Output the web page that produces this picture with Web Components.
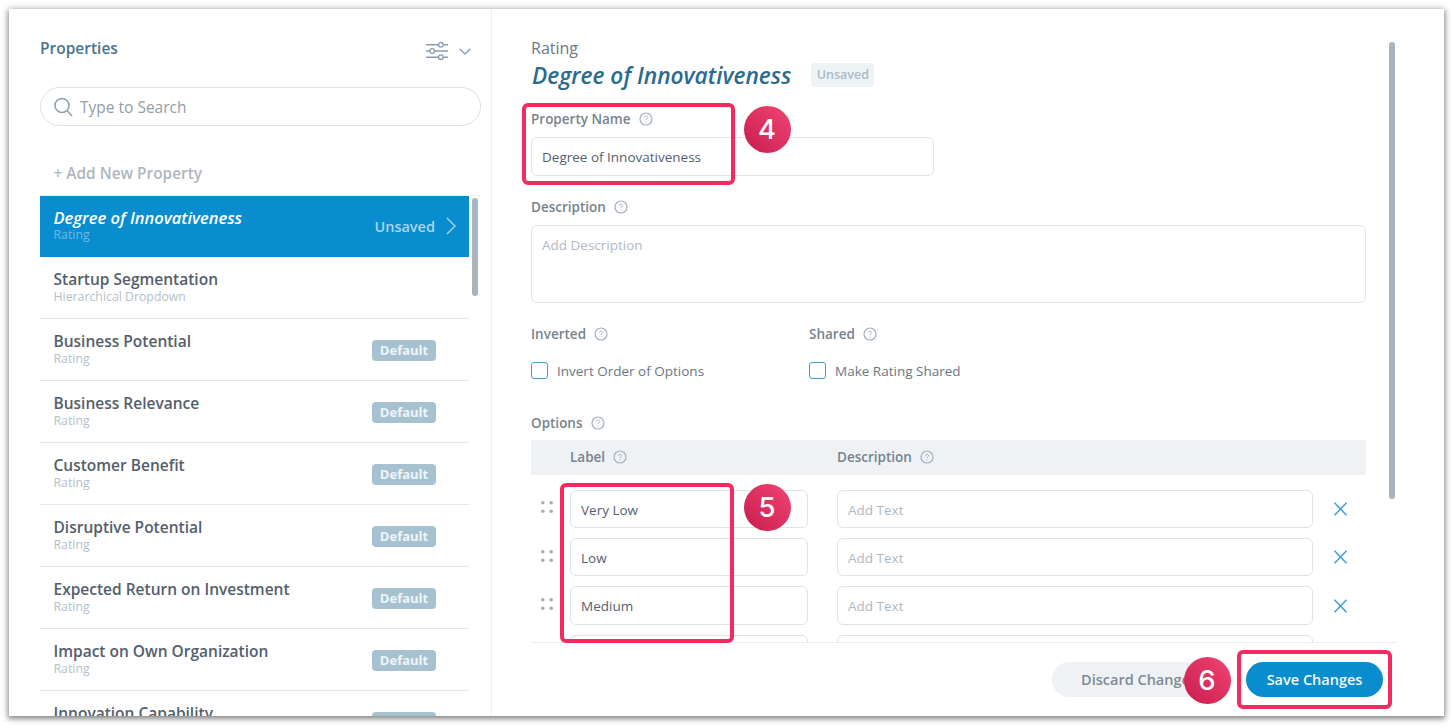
<!DOCTYPE html>
<html>
<head>
<meta charset="utf-8">
<style>
html, body { margin: 0; padding: 0; background: #fff; overflow: hidden; }
body { font-family: "Open Sans", sans-serif; }
</style>
</head>
<body>
<prop-app></prop-app>
<script>
const helpIcon = `<svg width="14" height="14" viewBox="0 0 14 14" fill="none" stroke="#a3b0bc" stroke-width="1.2"><circle cx="7" cy="7" r="6"/><path d="M5.4 5.7c0-.9.7-1.5 1.6-1.5s1.6.6 1.6 1.4c0 1.2-1.6 1.2-1.6 2.5" stroke-width="1"/><path d="M7 9.6v.9" stroke-width="1"/></svg>`;

//label with the little question mark
class PropLabel extends HTMLElement {
    constructor() {
        super();
        this.attachShadow({ mode: "open" });
        this.shadowRoot.innerHTML = `
<style>
:host { display: flex; align-items: center; gap: 8px; height: 18px; font-size: 13.5px; font-weight: 600; color: #75838f; white-space: nowrap; }
svg { display: block; }
</style>
<slot></slot>${helpIcon}`;
    }
}
customElements.define("prop-label", PropLabel);

//fake text input, text stays real text
class PropField extends HTMLElement {
    constructor() {
        super();
        this.attachShadow({ mode: "open" });
        this.shadowRoot.innerHTML = `
<style>
:host { display: block; box-sizing: border-box; height: 38.5px; padding: 0 10px; border: 1px solid #dde3ea; border-radius: 6px; background: #fff; font-size: 13.5px; line-height: 38px; color: #56606c; white-space: nowrap; overflow: hidden; }
:host([empty]) { color: #b0b9c4; }
:host([tall]) { height: 78px; }
</style>
<slot></slot>`;
    }
}
customElements.define("prop-field", PropField);

class PropCheck extends HTMLElement {
    constructor() {
        super();
        this.attachShadow({ mode: "open" });
        this.shadowRoot.innerHTML = `
<style>
:host { display: flex; align-items: center; gap: 9px; height: 18px; font-size: 13.5px; color: #6b7682; white-space: nowrap; }
i { display: block; box-sizing: border-box; width: 17px; height: 17px; border: 1.3px solid #3d9ed6; border-radius: 3px; }
</style>
<i></i><slot></slot>`;
    }
}
customElements.define("prop-check", PropCheck);

//one entry of the property list
class PropItem extends HTMLElement {
    constructor() {
        super();
        this.attachShadow({ mode: "open" });
        const active = this.hasAttribute("active");
        const badge = this.getAttribute("badge");
        let right = "";
        if (active) {
            right = `<span class="state">Unsaved</span><svg width="10" height="18" viewBox="0 0 10 18" fill="none" stroke="#a9d6ee" stroke-width="1.4"><path d="M1 1l8 8-8 8"/></svg>`;
        } else if (badge) {
            right = `<span class="badge">${badge}</span>`;
        }
        this.shadowRoot.innerHTML = `
<style>
:host { display: flex; align-items: center; box-sizing: border-box; height: 62px; padding: 1px 13px 0 13.500px; border-bottom: 1px solid #e0e7ee; flex: none; }
:host([active]) { height: 61px; padding-top: 0; background: #0a8dcf; border-bottom-color: #0a8dcf; }
.text { flex: 1; min-width: 0; padding-bottom: 4px; }
.name { font-size: 15.5px; line-height: 20px; font-weight: 600; color: #535e6c; white-space: nowrap; }
.sub { font-size: 12.3px; line-height: 14px; color: #b3bfca; margin-top: 1px; }
:host([active]) .text { padding-bottom: 3px; }
:host([active]) .name { color: #fff; font-style: italic; font-size: 16.5px; }
:host([active]) .sub { color: #6cbae4; margin-top: 0; }
.badge { width: 64px; height: 21px; margin-right: 20px; border-radius: 4px; background: #a6c2d0; color: #eef4f7; font-size: 13px; font-weight: 700; line-height: 21px; text-align: center; }
.state { font-size: 14.500px; font-weight: 600; color: #a9d6ee; margin-right: 11px; }
svg { display: block; }
</style>
<div class="text"><div class="name">${this.getAttribute("name")}</div><div class="sub">${this.getAttribute("type")}</div></div>
${right}`;
    }
}
customElements.define("prop-item", PropItem);

class PropSidebar extends HTMLElement {
    constructor() {
        super();
        this.attachShadow({ mode: "open" });
        const items = [
            ["Startup Segmentation", "Hierarchical Dropdown", ""],
            ["Business Potential", "Rating", "Default"],
            ["Business Relevance", "Rating", "Default"],
            ["Customer Benefit", "Rating", "Default"],
            ["Disruptive Potential", "Rating", "Default"],
            ["Expected Return on Investment", "Rating", "Default"],
            ["Impact on Own Organization", "Rating", "Default"],
            ["Innovation Capability", "Rating", "Default"]
        ];
        let rows = `<prop-item active name="Degree of Innovativeness" type="Rating"></prop-item>`;
        for (let i = 0; i < items.length; i++) {
            rows += `<prop-item name="${items[i][0]}" type="${items[i][1]}" badge="${items[i][2]}"></prop-item>`;
        }
        this.shadowRoot.innerHTML = `
<style>
:host { display: flex; flex-direction: column; box-sizing: border-box; width: 483px; flex: none; height: 100%; padding: 0 10px 0 31px; border-right: 1px solid #e9eff4; }
.head { display: flex; align-items: center; justify-content: space-between; height: 78px; padding-right: 10px; flex: none; }
.title { font-size: 15.5px; font-weight: 600; color: #4a7390; margin-top: -1px; }
.tools { display: flex; align-items: center; gap: 11px; margin-top: 7px; }
.tools svg:first-child { margin-top: -1px; }
.search { display: flex; align-items: center; gap: 7px; box-sizing: border-box; height: 39px; flex: none; padding-left: 13px; border: 1px solid #dbe1e7; border-radius: 20px; font-size: 15.5px; color: #939da7; }
.add { height: 70px; box-sizing: border-box; flex: none; padding: 34px 0 0 13.500px; font-size: 15.4px; line-height: 28px; font-weight: 600; color: #b0b6bd; border-bottom: 1px solid #e9eff4; }
.list { position: relative; flex: 1; min-height: 0; overflow: hidden; }
.rows { display: flex; flex-direction: column; width: 429px; }
.bar { position: absolute; left: 432px; top: 2px; width: 6px; height: 98px; border-radius: 3px; background: #a9b4bc; }
svg { display: block; flex: none; }
</style>
<div class="head">
  <div class="title">Properties</div>
  <div class="tools">
    <svg width="22" height="20" viewBox="0 0 23 20" fill="none" stroke="#8d9db1" stroke-width="1.4"><path d="M0 3.5h13M18 3.5h5M0 10h4M9 10h14M0 16.500h13M18 16.500h5"/><circle cx="15.500" cy="3.500" r="2.400"/><circle cx="6.500" cy="10" r="2.400"/><circle cx="15.500" cy="16.500" r="2.400"/></svg>
    <svg width="12" height="7" viewBox="0 0 12 7" fill="none" stroke="#8d9db1" stroke-width="1.3"><path d="M.7.700L6 6l5.300-5.300"/></svg>
  </div>
</div>
<div class="search">
  <svg width="19" height="20" viewBox="0 0 19 20" fill="none" stroke="#8f9fae" stroke-width="1.6"><circle cx="8" cy="8.500" r="7"/><path d="M13 13.500l5 5.500"/></svg>
  <span>Type to Search</span>
</div>
<div class="add">+ Add New Property</div>
<div class="list">
  <div class="rows">${rows}</div>
  <div class="bar"></div>
</div>`;
    }
}
customElements.define("prop-sidebar", PropSidebar);

//row of the options table
class PropOption extends HTMLElement {
    constructor() {
        super();
        this.attachShadow({ mode: "open" });
        let grip = "";
        const spots = [[1.800, 1.800], [10.200, 1.800], [1.800, 10.200], [10.200, 10.200]];
        for (let i = 0; i < spots.length; i++) {
            grip += `<circle cx="${spots[i][0]}" cy="${spots[i][1]}" r="1.800"/>`;
        }
        this.shadowRoot.innerHTML = `
<style>
:host { display: grid; grid-template-columns: 39px 238px 29px 476px 53px; align-items: center; flex: none; }
.grip { padding-left: 10px; margin-top: -3px; }
.label { grid-column: 2; }
.desc { grid-column: 4; }
.x { margin-left: 20px; }
svg { display: block; }
</style>
<div class="grip"><svg width="12" height="12" viewBox="0 0 12 12" fill="#a4afb9">${grip}</svg></div>
<prop-field class="label">${this.getAttribute("label")}</prop-field>
<prop-field class="desc" empty>${this.getAttribute("desc") || ""}</prop-field>
<svg class="x" width="15" height="14" viewBox="0 0 15 14" fill="none" stroke="#3d9ed6" stroke-width="1.500"><path d="M1.500.700l12 12.600M13.500.700l-12 12.600"/></svg>`;
    }
}
customElements.define("prop-option", PropOption);

class PropEditor extends HTMLElement {
    constructor() {
        super();
        this.attachShadow({ mode: "open" });
        this.shadowRoot.innerHTML = `
<style>
:host { display: flex; flex-direction: column; flex: 1; min-width: 0; height: 100%; }
.body { position: relative; flex: 1; min-height: 0; overflow: hidden; padding: 29px 0 0 39px; }
.col { width: 835px; }
.kind { font-size: 16px; line-height: 20px; color: #6d7885; }
.title { display: flex; align-items: center; gap: 20px; height: 30px; margin: 2px 0 0 1px; }
.title b { font-size: 22.700px; font-weight: 600; font-style: italic; color: #2b6a8f; white-space: nowrap; }
.title span { width: 63px; height: 24px; margin-top: 0; border-radius: 3px; background: #eef3f6; color: #a8bcc8; font-size: 12.500px; font-weight: 600; line-height: 24px; text-align: center; }
.name { margin-top: 20px; }
.name prop-field { width: 403px; margin-top: 9px; }
.desc { margin-top: 22px; }
.desc prop-field { margin-top: 9px; }
.pair { display: grid; grid-template-columns: 278px 1fr; margin-top: 22px; row-gap: 19px; }
.opts { margin-top: 34px; }
.thead { display: flex; align-items: center; height: 35px; margin-top: 8px; padding-left: 39px; background: #eef2f5; }
.thead prop-label:first-child { width: 267px; }
.rows { display: flex; flex-direction: column; gap: 9.900px; margin-top: 15px; }
.bar { position: absolute; left: 897px; top: 33px; width: 6px; height: 457px; border-radius: 3px; background: #a9b4bc; }
.foot { display: flex; justify-content: flex-end; gap: 24px; flex: none; box-sizing: border-box; height: 74px; margin: 0 47px 0 39px; padding: 19px 14px 0 0; border-top: 1px solid #e8edf2; }
.btn { height: 35px; border-radius: 18px; font-size: 14.500px; font-weight: 600; line-height: 35px; text-align: center; white-space: nowrap; }
.discard { width: 170px; text-indent: 4px; background: #eef2f5; color: #7d8a96; }
.save { width: 137px; background: #0a8dcf; color: #f2fafd; }
</style>
<div class="body">
  <div class="col">
    <div class="kind">Rating</div>
    <div class="title"><b>Degree of Innovativeness</b><span>Unsaved</span></div>
    <div class="name"><prop-label>Property Name</prop-label><prop-field>Degree of Innovativeness</prop-field></div>
    <div class="desc"><prop-label>Description</prop-label><prop-field tall empty>Add Description</prop-field></div>
    <div class="pair">
      <prop-label>Inverted</prop-label><prop-label>Shared</prop-label>
      <prop-check>Invert Order of Options</prop-check><prop-check>Make Rating Shared</prop-check>
    </div>
    <div class="opts">
      <prop-label>Options</prop-label>
      <div class="thead"><prop-label>Label</prop-label><prop-label>Description</prop-label></div>
      <div class="rows">
        <prop-option label="Very Low" desc="Add Text"></prop-option>
        <prop-option label="Low" desc="Add Text"></prop-option>
        <prop-option label="Medium" desc="Add Text"></prop-option>
        <prop-option label=""></prop-option>
      </div>
    </div>
  </div>
  <div class="bar"></div>
</div>
<div class="foot">
  <div class="btn discard">Discard Changes</div>
  <div class="btn save">Save Changes</div>
</div>`;
    }
}
customElements.define("prop-editor", PropEditor);

//the numbered red circle lying over the screenshot
class PropCallout extends HTMLElement {
    constructor() {
        super();
        this.attachShadow({ mode: "open" });
        this.shadowRoot.innerHTML = `
<style>
:host { position: absolute; width: 47px; height: 47px; border-radius: 50%; background: linear-gradient(45deg, #c91c4e, #f04673); color: #fff; font-family: Inter, "Open Sans", sans-serif; font-size: 27.500px; font-weight: 500; line-height: 47px; text-align: center; }
</style>
<slot></slot>`;
    }
}
customElements.define("prop-callout", PropCallout);

class PropMark extends HTMLElement {
    constructor() {
        super();
        this.attachShadow({ mode: "open" });
        this.shadowRoot.innerHTML = `
<style>
:host { position: absolute; box-sizing: border-box; border: 4px solid #f52a5f; border-radius: 6px; }
</style>`;
    }
}
customElements.define("prop-mark", PropMark);

class PropApp extends HTMLElement {
    constructor() {
        super();
        this.attachShadow({ mode: "open" });
        this.shadowRoot.innerHTML = `
<style>
:host { display: block; box-sizing: border-box; width: 1452px; height: 727px; padding: 9px 8px 11px 9px; }
.card { position: relative; display: flex; height: 100%; overflow: hidden; background: #fff; }
.wrap { height: 100%; box-shadow: 0 2px 5px 1px rgba(60,60,60,.55), 0 0 10px rgba(0,0,0,.12); }
</style>
<div class="wrap">
<div class="card">
  <prop-sidebar></prop-sidebar>
  <prop-editor></prop-editor>
  <prop-mark style="left:513px;top:94px;width:213px;height:82px"></prop-mark>
  <prop-mark style="left:551px;top:474px;width:174px;height:160px"></prop-mark>
  <prop-mark style="left:1228px;top:641px;width:155px;height:59px"></prop-mark>
  <prop-callout style="left:734.500px;top:96.500px">4</prop-callout>
  <prop-callout style="left:734.500px;top:474.500px">5</prop-callout>
  <prop-callout style="left:1174.500px;top:647.500px">6</prop-callout>
</div>
</div>`;
    }
}
customElements.define("prop-app", PropApp);
</script>
</body>
</html>
